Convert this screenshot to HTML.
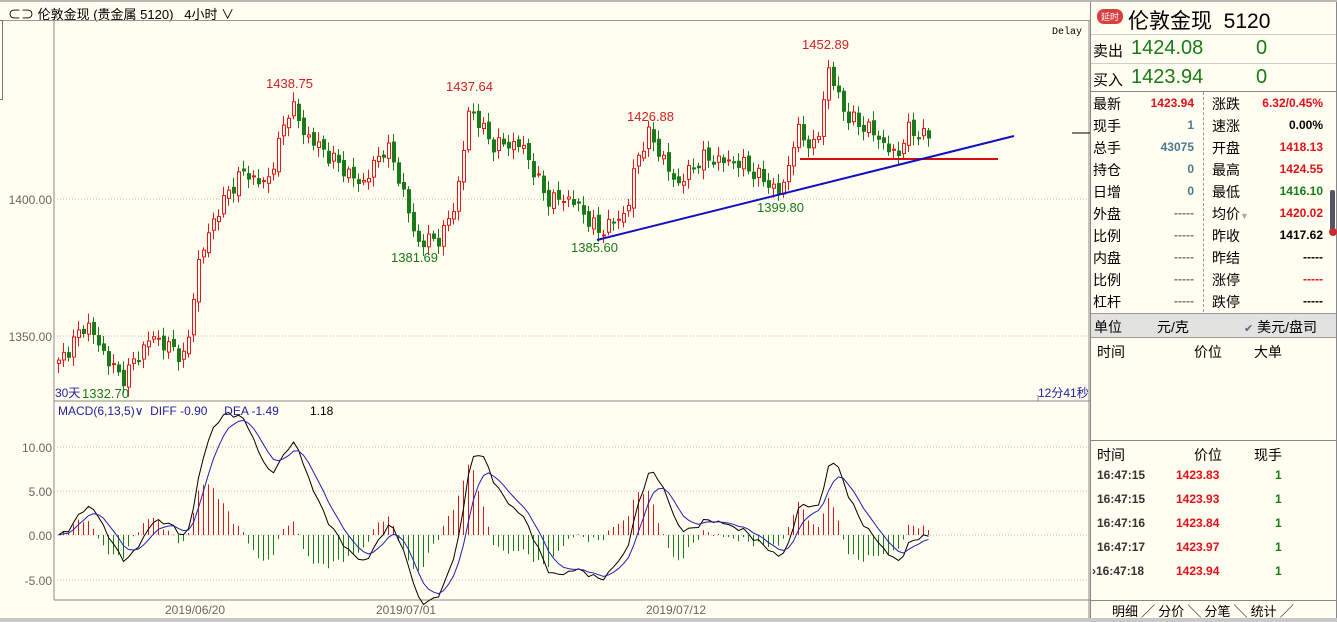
<!DOCTYPE html>
<html><head><meta charset="utf-8">
<style>
*{margin:0;padding:0;box-sizing:border-box}
body{width:1337px;height:622px;overflow:hidden;background:#fffef0;font-family:"Liberation Sans","Noto Sans CJK SC",sans-serif;position:relative;font-size:13px;color:#000}
.a{position:absolute;white-space:nowrap}
.r{color:#e0101a}.g{color:#1a7a1a}.b{font-weight:bold}
</style></head><body>
<div class="a" style="left:0;top:0;width:1337px;height:2px;background:#b8b8b8"></div>
<div class="a" style="left:0;top:618px;width:1337px;height:4px;background:#c8c8c8"></div>
<div class="a" style="left:8px;top:4px;font-size:13px">⊂⊃ 伦敦金现 (贵金属 5120)&nbsp;&nbsp;&nbsp;4小时 ∨</div>
<div class="a" style="left:0;top:20px;width:1090px;height:1px;background:#999"></div>
<div class="a" style="left:0;top:20px;width:3px;height:80px;border:1px solid #777;border-left:none"></div>
<svg class="a" style="left:0;top:0" width="1090" height="622" id="ch">
<line x1="54" y1="21" x2="54" y2="600" stroke="#888"/>
<line x1="54" y1="401" x2="1090" y2="401" stroke="#888"/>
<line x1="54" y1="600" x2="1090" y2="600" stroke="#888"/>
<line x1="1089" y1="21" x2="1089" y2="618" stroke="#888"/>
<g stroke="#bbb" stroke-dasharray="1,2">
<line x1="54" y1="199" x2="1089" y2="199"/><line x1="54" y1="336" x2="1089" y2="336"/>
<line x1="54" y1="447" x2="1089" y2="447"/><line x1="54" y1="491" x2="1089" y2="491"/><line x1="54" y1="535" x2="1089" y2="535"/><line x1="54" y1="580" x2="1089" y2="580"/>
</g>
<line x1="1038" y1="395" x2="1038" y2="401" stroke="#888"/>
<line x1="1072" y1="133" x2="1090" y2="133" stroke="#000"/>
<g font-family="Liberation Sans,sans-serif" font-size="12" fill="#666" text-anchor="end">
<text x="52" y="204">1400.00</text><text x="52" y="341">1350.00</text>
<text x="52" y="452">10.00</text><text x="52" y="496">5.00</text><text x="52" y="540">0.00</text><text x="52" y="585">-5.00</text>
</g>
<g font-family="Liberation Sans,sans-serif" font-size="12" fill="#666">
<text x="165" y="614">2019/06/20</text><text x="376" y="614">2019/07/01</text><text x="646" y="614">2019/07/12</text>
</g>
<g id="cd"></g><g id="md"></g>
<line x1="800" y1="159" x2="998" y2="159" stroke="#d01010" stroke-width="2"/>
<line x1="597" y1="240" x2="1014" y2="136" stroke="#1010c0" stroke-width="2"/>
<g font-family="Liberation Sans,sans-serif" font-size="13">
<text x="266" y="88" fill="#d02020">1438.75</text><text x="446" y="91" fill="#d02020">1437.64</text>
<text x="627" y="121" fill="#d02020">1426.88</text><text x="802" y="49" fill="#d02020">1452.89</text>
<text x="391" y="262" fill="#1a7a1a">1381.69</text><text x="571" y="252" fill="#1a7a1a">1385.60</text>
<text x="757" y="212" fill="#1a7a1a">1399.80</text><text x="82" y="398" fill="#1a7a1a">1332.70</text>
</g>
<g font-family="Liberation Sans,sans-serif" font-size="12">
<text x="55" y="397" fill="#2020a0">30天</text><text x="1038" y="397" fill="#2020a0">12分41秒</text>
<text x="58" y="415" fill="#2020a0">MACD(6,13,5)∨&#160;&#160;DIFF -0.90&#160;&#160;&#160;&#160;&#160;DEA -1.49</text>
<text x="310" y="415" fill="#000">1.18</text>
<text x="1052" y="34" fill="#000" font-family="Liberation Mono,monospace" font-size="10">Delay</text>
</g>
</svg>
<div class="a" style="left:1090px;top:2px;width:247px;height:616px;border-left:1px solid #888;border-right:1px solid #888"></div>
<div class="a" style="left:1097px;top:9px;background:#d84040;color:#fff;font-size:9px;border-radius:7px;padding:1px 4px">延时</div>
<div class="a" style="left:1128px;top:5px;font-size:21px">伦敦金现&nbsp;&nbsp;5120</div>
<div class="a" style="left:1091px;top:34px;width:245px;height:1px;background:#ccc"></div>
<div class="a" style="left:1093px;top:40px;font-size:15px">卖出</div><div class="a g" style="left:1131px;top:37px;font-size:20px">1424.08</div><div class="a g" style="left:1256px;top:37px;font-size:20px">0</div>
<div class="a" style="left:1091px;top:63px;width:245px;height:1px;background:#ccc"></div>
<div class="a" style="left:1093px;top:69px;font-size:15px">买入</div><div class="a g" style="left:1131px;top:66px;font-size:20px">1423.94</div><div class="a g" style="left:1256px;top:66px;font-size:20px">0</div>
<div class="a" style="left:1091px;top:91px;width:245px;height:1px;background:#888"></div>
<div class="a" style="left:1203px;top:92px;height:220px;border-left:1px dashed #999"></div>
<div id="rows"></div>
<div class="a" style="left:1091px;top:313px;width:245px;height:25px;background:#e2e2e0;border-top:1px solid #999;border-bottom:1px solid #999"></div>
<div class="a" style="left:1094px;top:317px;font-size:14px">单位</div><div class="a" style="left:1157px;top:317px;font-size:14px">元/克</div><div class="a" style="left:1244px;top:317px;font-size:14px"><span style="color:#568;font-size:11px">✔</span> 美元/盘司</div>
<div class="a" style="left:1097px;top:342px;font-size:14px">时间</div><div class="a" style="left:1194px;top:342px;font-size:14px">价位</div><div class="a" style="left:1254px;top:342px;font-size:14px">大单</div>
<div class="a" style="left:1091px;top:440px;width:245px;height:1px;background:#888"></div>
<div class="a" style="left:1097px;top:445px;font-size:14px">时间</div><div class="a" style="left:1194px;top:445px;font-size:14px">价位</div><div class="a" style="left:1254px;top:445px;font-size:14px">现手</div>
<div id="ticks"></div>
<div class="a" style="left:1091px;top:600px;width:245px;height:1px;background:#888"></div>
<div class="a" style="left:1112px;top:601px;font-size:13px">明细 ╱ 分价 ╲ 分笔 ╲ 统计 ╱</div>
<div class="a" style="left:1330px;top:190px;width:5px;height:45px;background:#556;border-radius:2px"></div>
<div class="a" style="left:1329px;top:228px;width:8px;height:8px;background:#c03030;border-radius:4px"></div>
<script>
var R=[["最新","1423.94","r","涨跌","6.32/0.45%","r"],["现手","1","t","速涨","0.00%","k"],["总手","43075","t","开盘","1418.13","r"],["持仓","0","t","最高","1424.55","r"],["日增","0","t","最低","1416.10","g"],["外盘","-----","d","均价","1420.02","r"],["比例","-----","d","昨收","1417.62","k"],["内盘","-----","d","昨结","-----","k"],["比例","-----","d","涨停","-----","r"],["杠杆","-----","d","跌停","-----","k"]];
var col={r:"#e0101a",g:"#1a7a1a",t:"#4a7a90",k:"#000",d:"#777"};
var h="";R.forEach(function(r,i){var y=94+i*22;
h+='<div class="a" style="left:1093px;top:'+y+'px;font-size:14px">'+r[0]+'</div>';
h+='<div class="a b" style="right:143px;top:'+(y+2)+'px;font-size:12px;color:'+col[r[2]]+'">'+r[1]+'</div>';
h+='<div class="a" style="left:1212px;top:'+y+'px;font-size:14px">'+r[3]+(i==5?'<span style="color:#aaa;font-size:9px">▼</span>':'')+'</div>';
h+='<div class="a b" style="right:14px;top:'+(y+2)+'px;font-size:12px;color:'+col[r[5]]+'">'+r[4]+'</div>';});
document.getElementById("rows").innerHTML=h;
var T=[["16:47:15","1423.83"],["16:47:15","1423.93"],["16:47:16","1423.84"],["16:47:17","1423.97"],["16:47:18","1423.94"]];h="";
T.forEach(function(t,i){var y=468+i*24;h+='<div class="a b" style="left:'+(i==4?1092:1097)+'px;top:'+y+'px;font-size:12px;color:#333">'+(i==4?'›':'')+t[0]+'</div><div class="a b r" style="left:1176px;top:'+y+'px;font-size:12px">'+t[1]+'</div><div class="a b g" style="left:1275px;top:'+y+'px;font-size:12px">1</div>';});
document.getElementById("ticks").innerHTML=h;
var K=[[57,1340],[85,1355],[100,1345],[120,1334],[150,1350],[185,1342],[195,1375],[215,1395],[240,1410],[265,1405],[290,1436],[300,1425],[330,1415],[360,1405],[385,1420],[400,1405],[415,1384],[440,1386],[455,1400],[468,1434],[490,1420],[520,1420],[545,1400],[570,1400],[597,1388],[625,1395],[635,1415],[648,1424],[675,1405],[700,1415],[740,1413],[780,1402],[795,1425],[815,1418],[826,1448],[845,1430],[870,1425],[895,1415],[905,1425],[928,1423]];
function tgt(x){for(var i=0;i<K.length-1;i++)if(x<=K[i+1][0]){var t=(x-K[i][0])/(K[i+1][0]-K[i][0]);return K[i][1]+t*(K[i+1][1]-K[i][1]);}return K[K.length-1][1];}
function Y(p){return 199-(p-1400)*2.74;}
var s="",prev=1340,closes=[];
for(var i=0;i<175;i++){var x=57+i*5;var c=tgt(x)+Math.sin(i*2.3)*2+Math.cos(i*1.7)*1.2;var o=prev+Math.sin(i*3.1)*1;
var hi=Math.max(o,c)+1+Math.abs(Math.sin(i*1.3))*2.5,lo=Math.min(o,c)-1-Math.abs(Math.cos(i*0.9))*2.5;
var up=c>=o,clr=up?"#e01818":"#1a7a1a";
s+='<line x1="'+(x+1.5)+'" y1="'+Y(hi)+'" x2="'+(x+1.5)+'" y2="'+Y(lo)+'" stroke="'+clr+'"/>';
var yt=Y(Math.max(o,c)),hh=Math.max(1,Y(Math.min(o,c))-yt);
s+='<rect x="'+(x+0.5)+'" y="'+yt+'" width="3" height="'+hh+'" fill="'+(up?"#fffef0":clr)+'" stroke="'+clr+'"/>';
prev=c;closes.push(c);}
document.getElementById("cd").innerHTML=s;
var e6=closes[0],e13=closes[0],dea=0,d1="",d2="",m="";
closes.forEach(function(c,i){e6=e6+(c-e6)*2/7;e13=e13+(c-e13)*2/14;var df=e6-e13;dea=dea+(df-dea)*2/6;var hs=(df-dea)*1.5;var x=58.5+i*5;
d1+=(i?"L":"M")+x+","+(535-df*8.8);d2+=(i?"L":"M")+x+","+(535-dea*8.8);
m+='<line x1="'+x+'" y1="535" x2="'+x+'" y2="'+(535-hs*8.8)+'" stroke="'+(hs>=0?"#d01818":"#1a7a1a")+'"/>';});
m+='<path d="'+d1+'" fill="none" stroke="#000"/><path d="'+d2+'" fill="none" stroke="#2020b0"/>';
document.getElementById("md").innerHTML=m;
</script>
</body></html>
